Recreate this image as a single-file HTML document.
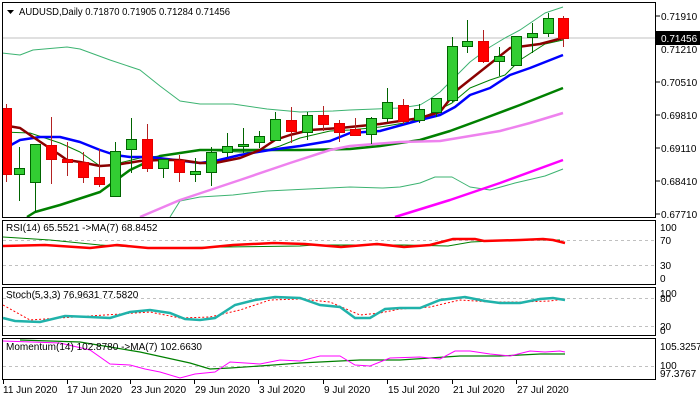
<!DOCTYPE html>
<html><head><meta charset="utf-8"><style>
html,body{margin:0;padding:0;background:#fff;}
svg{display:block;font-family:"Liberation Sans","DejaVu Sans",sans-serif;}
text{font-size:10px;fill:#000;}
</style></head><body>
<svg width="700" height="400" viewBox="0 0 700 400" xmlns="http://www.w3.org/2000/svg">
<rect width="700" height="400" fill="#fff"/>
<line x1="2" y1="38" x2="656" y2="38" stroke="#c0c0c0" stroke-width="1"/>
<g fill="none" stroke-linejoin="round">
<polyline stroke="#3cb371" stroke-width="1" points="2,53 20,55 33,50 67,47 80,49 110,60 140,70 160,86 180,101 200,104 233,104 267,109 300,112 333,111 350,110 400,108 420,105 430,99 440,92 452,80 470,62 490,47 505,38 520,30 545,13 563,7"/>
<polyline stroke="#3cb371" stroke-width="1" points="170,217 180,201 200,197 233,195 267,191 350,187 383,188 400,187 420,183 435,177 452,177 470,187 490,190 515,183 545,176 563,169"/>
<polyline stroke="#008000" stroke-width="1" points="2,132 30,133 60,143 80,152 100,166 115,164 140,158 160,156 200,150 240,152 260,152 280,146 300,138 330,131 350,130 380,127 410,122 430,114 452,103 470,88 490,80 505,75 520,60 545,44 563,40"/>
<polyline stroke="#008000" stroke-width="2.5" points="27,217 35,212 60,205 100,192 130,170 160,156 200,150 233,150 300,150 350,149 380,146 420,140 450,131 480,120 520,105 563,88"/>
<polyline stroke="#ee82ee" stroke-width="2.5" points="140,217 180,200 240,180 290,163 330,150 350,146 400,142 440,141 470,136 500,131 530,123 563,113"/>
<polyline stroke="#ff00ff" stroke-width="2.5" points="395,217 450,200 500,183 563,160"/>
<polyline stroke="#0000ff" stroke-width="2.5" points="2,150 20,140 40,137 60,137 80,142 100,150 115,155 130,157 150,157 175,160 200,163 215,161 240,155 270,150 300,146 330,141 350,133 380,131 420,120 440,115 455,107 470,95 490,88 510,75 530,68 563,55"/>
<polyline stroke="#8b0000" stroke-width="2.5" points="2,125 20,128 33,137 60,155 67,160 80,162 100,166 115,165 140,161 160,160 180,160 200,163 215,163 240,158 260,150 275,140 290,135 310,130 340,128 350,127 380,124 420,118 440,112 457,90 510,48 540,44 563,38"/>
</g>
<g stroke-width="1">
<g stroke="#006400">
<line x1="19.5" y1="147" x2="19.5" y2="201"/><line x1="35.5" y1="144" x2="35.5" y2="212"/><line x1="115.5" y1="142" x2="115.5" y2="196"/><line x1="131.5" y1="118" x2="131.5" y2="173"/><line x1="163.5" y1="159" x2="163.5" y2="178"/><line x1="195.5" y1="158" x2="195.5" y2="182"/><line x1="211.5" y1="147" x2="211.5" y2="186"/><line x1="227.5" y1="133" x2="227.5" y2="157"/><line x1="243.5" y1="128" x2="243.5" y2="153"/><line x1="259.5" y1="131" x2="259.5" y2="148"/><line x1="275.5" y1="112" x2="275.5" y2="140"/><line x1="307.5" y1="112" x2="307.5" y2="140"/><line x1="371.5" y1="117" x2="371.5" y2="144"/><line x1="387.5" y1="88" x2="387.5" y2="122"/><line x1="419.5" y1="104" x2="419.5" y2="123"/><line x1="436.5" y1="98" x2="436.5" y2="117"/><line x1="452.5" y1="37" x2="452.5" y2="102"/><line x1="467.5" y1="20" x2="467.5" y2="53"/><line x1="499.5" y1="47" x2="499.5" y2="76"/><line x1="532.5" y1="23" x2="532.5" y2="53"/><line x1="548.5" y1="13" x2="548.5" y2="37"/>
</g>
<g stroke="#b22222">
<line x1="6.5" y1="104" x2="6.5" y2="182"/><line x1="51.5" y1="117" x2="51.5" y2="184"/><line x1="67.5" y1="142" x2="67.5" y2="176"/><line x1="83.5" y1="152" x2="83.5" y2="183"/><line x1="99.5" y1="149" x2="99.5" y2="187"/><line x1="147.5" y1="124" x2="147.5" y2="172"/><line x1="179.5" y1="155" x2="179.5" y2="182"/><line x1="291.5" y1="107" x2="291.5" y2="143"/><line x1="323.5" y1="106" x2="323.5" y2="131"/><line x1="339.5" y1="120" x2="339.5" y2="142"/><line x1="355.5" y1="118" x2="355.5" y2="135"/><line x1="403.5" y1="99" x2="403.5" y2="124"/><line x1="483.5" y1="30" x2="483.5" y2="63"/><line x1="563.5" y1="16" x2="563.5" y2="47"/>
</g>
<g fill="#32cd32" stroke="#006400">
<rect x="14.5" y="168.5" width="10" height="6"/><rect x="30.5" y="144.5" width="10" height="38"/><rect x="110.5" y="151.5" width="10" height="45"/><rect x="126.5" y="139.5" width="10" height="10"/><rect x="158.5" y="159.5" width="10" height="9"/><rect x="190.5" y="171.5" width="10" height="3"/><rect x="206.5" y="152.5" width="10" height="20"/><rect x="222.5" y="146.5" width="10" height="6"/><rect x="238.5" y="144.5" width="10" height="2"/><rect x="254.5" y="136.5" width="10" height="6"/><rect x="270.5" y="119.5" width="10" height="21"/><rect x="302.5" y="115.5" width="10" height="17"/><rect x="366.5" y="118.5" width="10" height="16"/><rect x="382.5" y="102.5" width="10" height="16"/><rect x="414.5" y="109.5" width="10" height="11"/><rect x="431.5" y="98.5" width="10" height="14"/><rect x="447.5" y="46.5" width="10" height="54"/><rect x="462.5" y="41.5" width="10" height="5"/><rect x="494.5" y="56.5" width="10" height="5"/><rect x="511.5" y="36.5" width="10" height="29"/><rect x="527.5" y="33.5" width="10" height="4"/><rect x="543.5" y="18.5" width="10" height="15"/>
</g>
<g fill="#ff0000" stroke="#e00000">
<rect x="1.5" y="108.5" width="10" height="66"/><rect x="46.5" y="145.5" width="10" height="14"/><rect x="62.5" y="159.5" width="10" height="3"/><rect x="78.5" y="162.5" width="10" height="15"/><rect x="94.5" y="177.5" width="10" height="7"/><rect x="142.5" y="139.5" width="10" height="29"/><rect x="174.5" y="160.5" width="10" height="12"/><rect x="286.5" y="120.5" width="10" height="11"/><rect x="318.5" y="115.5" width="10" height="9"/><rect x="334.5" y="123.5" width="10" height="9"/><rect x="350.5" y="129.5" width="10" height="6"/><rect x="398.5" y="105.5" width="10" height="16"/><rect x="478.5" y="41.5" width="10" height="20"/><rect x="558.5" y="18.5" width="10" height="20"/>
</g>
</g>
<rect x="0" y="0" width="2" height="400" fill="#fff"/>
<rect x="2.5" y="2.5" width="653" height="215" fill="none" stroke="#000"/>
<path d="M7 10 h7 l-3.5 4 z" fill="#000"/>
<text x="19" y="15" textLength="211" lengthAdjust="spacingAndGlyphs">AUDUSD,Daily  0.71870 0.71905 0.71284 0.71456</text>
<g>
<line x1="656" y1="16" x2="660" y2="16" stroke="#000"/><text x="661" y="20">0.71910</text>
<text x="661" y="53">0.71210</text>
<line x1="656" y1="82" x2="660" y2="82" stroke="#000"/><text x="661" y="86">0.70510</text>
<line x1="656" y1="115" x2="660" y2="115" stroke="#000"/><text x="661" y="119">0.69810</text>
<line x1="656" y1="148" x2="660" y2="148" stroke="#000"/><text x="661" y="152">0.69110</text>
<line x1="656" y1="181" x2="660" y2="181" stroke="#000"/><text x="661" y="185">0.68410</text>
<line x1="656" y1="214" x2="660" y2="214" stroke="#000"/><text x="661" y="218">0.67710</text>
<rect x="656" y="31" width="44" height="14" fill="#000"/>
<text x="661" y="42" style="fill:#fff">0.71456</text>
</g>
<rect x="2.5" y="220.5" width="653" height="64" fill="none" stroke="#000"/>
<g stroke="#c0c0c0" stroke-dasharray="3,3"><line x1="3" y1="240.5" x2="655" y2="240.5"/><line x1="3" y1="265.5" x2="655" y2="265.5"/></g>
<polyline fill="none" stroke="#008000" stroke-width="1" points="3,237 50,240 100,245 150,248 224,247 300,246 314,245 404,245 448,246 471,242 516,240 560,240"/>
<polyline fill="none" stroke="#ff0000" stroke-width="2.5" points="3,246 45,245 90,248 117,245 148,248 202,248 233,245 274,243 305,244 341,247 377,244 404,247 430,245 453,239 475,239 484,241 520,240 543,239 553,240 565,243"/>
<text x="6" y="231">RSI(14) 65.5521  -&gt;MA(7) 68.8452</text>
<text x="660" y="231">100</text><text x="660" y="244">70</text><text x="660" y="269">30</text><text x="660" y="282">0</text>
<rect x="2.5" y="287.5" width="653" height="48" fill="none" stroke="#000"/>
<g stroke="#c0c0c0" stroke-dasharray="3,3"><line x1="3" y1="298.5" x2="655" y2="298.5"/><line x1="3" y1="326.5" x2="655" y2="326.5"/></g>
<polyline fill="none" stroke="#ff0000" stroke-width="1" stroke-dasharray="2,2" points="3,305 30,320 60,318 90,316 120,314 150,312 180,318 210,317 240,310 270,300 300,299 330,302 360,315 380,313 400,309 430,307 460,300 490,302 520,302 550,301 565,299"/>
<polyline fill="none" stroke="#20b2aa" stroke-width="2.5" points="3,318 15,321 40,322 65,316 90,317 110,318 130,312 150,310 170,313 185,319 200,320 215,318 235,305 255,300 275,297 300,298 320,305 340,307 355,318 370,318 385,309 400,308 420,308 440,300 465,297 485,301 500,303 520,303 540,299 553,298 565,300"/>
<text x="6" y="298">Stoch(5,3,3) 76.9631 77.5820</text>
<text x="660" y="297">100</text><text x="660" y="302">80</text><text x="660" y="330">20</text><text x="660" y="334">0</text>
<rect x="2.5" y="338.5" width="653" height="41" fill="none" stroke="#000"/>
<line x1="3" y1="366.5" x2="655" y2="366.5" stroke="#c0c0c0" stroke-dasharray="3,3"/>
<polyline fill="none" stroke="#008000" stroke-width="1.2" points="20,340 80,342 140,352 190,363 210,369 230,368 260,366 300,363 340,361 360,360 400,360 430,358 460,356 500,356 540,354 565,354"/>
<polyline fill="none" stroke="#ff00ff" stroke-width="1" points="3,341 60,343 90,350 110,364 130,365 145,369 160,372 180,378 195,374 215,372 230,362 260,364 280,360 300,361 320,356 340,356 355,365 370,366 390,358 420,357 440,359 455,351 470,351 490,354 510,356 530,351 545,352 560,351 565,352"/>
<text x="6" y="350">Momentum(14) 102.8780  -&gt;MA(7) 102.6630</text>
<text x="660" y="350">105.3257</text><text x="660" y="369">100</text><text x="660" y="377">97.3767</text>
<g stroke="#000"><line x1="3.5" y1="380" x2="3.5" y2="384"/><line x1="67.5" y1="380" x2="67.5" y2="384"/><line x1="130.5" y1="380" x2="130.5" y2="384"/><line x1="194.5" y1="380" x2="194.5" y2="384"/><line x1="258.5" y1="380" x2="258.5" y2="384"/><line x1="323.5" y1="380" x2="323.5" y2="384"/><line x1="387.5" y1="380" x2="387.5" y2="384"/><line x1="452.5" y1="380" x2="452.5" y2="384"/><line x1="516.5" y1="380" x2="516.5" y2="384"/></g>
<text x="3" y="393">11 Jun 2020</text><text x="67" y="393">17 Jun 2020</text><text x="131" y="393">23 Jun 2020</text><text x="195" y="393">29 Jun 2020</text><text x="259" y="393">3 Jul 2020</text><text x="324" y="393">9 Jul 2020</text><text x="388" y="393">15 Jul 2020</text><text x="453" y="393">21 Jul 2020</text><text x="517" y="393">27 Jul 2020</text>
</svg>
</body></html>
